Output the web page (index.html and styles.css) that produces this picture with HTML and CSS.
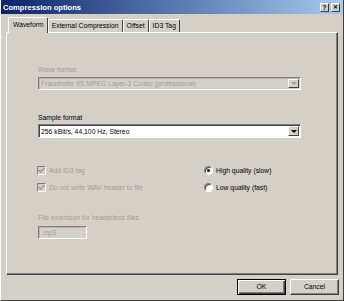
FILE: index.html
```html
<!DOCTYPE html>
<html lang="en">

<head>
    <meta charset="UTF-8">
    <title>Compression options</title>
    <link rel="stylesheet" href="styles.css">
</head>

<body>
    <div class="window">
        <div class="titlebar">
            <span class="title">Compression options</span>
            <span class="capbtn">?</span>
            <span class="capbtn close">&#x2715;</span>
        </div>

        <div class="tabs">
            <span class="tab current">Waveform</span>
            <span class="tab">External Compression</span>
            <span class="tab">Offset</span>
            <span class="tab">ID3 Tag</span>
        </div>

        <div class="panel">
            <div class="label disabled first">Wave format</div>
            <div class="combo off">
                <span class="value">Fraunhofer IIS MPEG Layer-3 Codec (professional)</span>
                <span class="drop"><i></i></span>
            </div>

            <div class="label second">Sample format</div>
            <div class="combo tall">
                <span class="value">256 kBit/s, 44,100 Hz, Stereo</span>
                <span class="drop"><i></i></span>
            </div>

            <div class="options">
                <label class="check disabled"><span class="box">
                        <svg width="7" height="7" viewBox="0 0 7 7">
                            <path d="M0.5 3 L2.5 5 L6.5 1" fill="none" stroke="#9c988f" stroke-width="1.3" />
                        </svg></span>Add ID3 tag</label>
                <label class="radio"><span class="dot on"></span>High quality (slow)</label>
                <label class="check disabled"><span class="box">
                        <svg width="7" height="7" viewBox="0 0 7 7">
                            <path d="M0.5 3 L2.5 5 L6.5 1" fill="none" stroke="#9c988f" stroke-width="1.3" />
                        </svg></span>Do not write WAV header to file</label>
                <label class="radio"><span class="dot"></span>Low quality (fast)</label>
            </div>

            <div class="label disabled third">File extension for headerless files</div>
            <div class="edit">.mp3</div>
        </div>

        <div class="footer">
            <span class="button default">OK</span>
            <span class="button">Cancel</span>
        </div>
    </div>
</body>

</html>
```

FILE: styles.css
```css
* {
    margin: 0px;
    padding: 0px;
    box-sizing: border-box;
}

body {
    background: #d4d0c8;
    font-family: "Liberation Sans", Arial, sans-serif;
    font-size: 6.8px;
    color: #000;
}

.window {
    width: 344px;
    height: 301px;
    background: #d4d0c8;
    border-right: 1px solid #404040;
    border-bottom: 1px solid #404040;
    border-left: 1px solid #ffffff;
    display: flex;
    flex-direction: column;
}

/* 标题栏 */
.titlebar {
    height: 14px;
    display: flex;
    align-items: center;
    padding: 0 3px 0 2px;
    background: linear-gradient(to right, #0a246a, #a6caf0);
}

.title {
    flex: 1;
    color: #fff;
    font-weight: bold;
    font-size: 7.6px;
}

.capbtn {
    width: 9px;
    height: 9px;
    margin-left: 2px;
    background: #d4d0c8;
    border: 1px solid;
    border-color: #fff #404040 #404040 #fff;
    font-size: 6.5px;
    font-weight: bold;
    line-height: 7px;
    text-align: center;
}

.close {
    font-size: 5.5px;
}

/* 选项卡 */
.tabs {
    height: 18px;
    padding: 3px 0 0 7px;
    display: flex;
    align-items: flex-end;
    position: relative;
    z-index: 1;
}

.tab {
    height: 13px;
    padding: 0 3px;
    line-height: 12px;
    border-top: 1px solid #fff;
    border-left: 1px solid #fff;
    border-right: 1px solid #404040;
    border-radius: 2px 2px 0 0;
}

.tab.current {
    height: 16px;
    margin-bottom: -1px;
    padding: 0 3px 0 4px;
    line-height: 13px;
    background: #d4d0c8;
}

.panel {
    width: 332px;
    height: 243px;
    margin-left: 5px;
    padding: 0 0 0 31px;
    border: 1px solid;
    border-color: #fff #404040 #404040 #fff;
    box-shadow: inset -1px -1px #808080;
}

.label {
    height: 9px;
    line-height: 9px;
}

.first {
    margin-top: 32px;
}

.second {
    margin-top: 23px;
}

.third {
    margin-top: 20px;
}

.disabled {
    color: #a29e96;
}

/* 下拉框 */
.combo {
    width: 263px;
    height: 13px;
    margin-top: 3px;
    display: flex;
    align-items: center;
    background: #fff;
    border: 1px solid;
    border-color: #808080 #fff #fff #808080;
    box-shadow: inset 1px 1px #404040;
    padding: 1px 1px 1px 2px;
}

.combo.tall {
    height: 14px;
    margin-top: 2px;
}

.combo.off {
    background: #d4d0c8;
    color: #a29e96;
    box-shadow: inset 1px 1px #b8b4ac;
}

.value {
    flex: 1;
}

.drop {
    width: 11px;
    height: 100%;
    display: flex;
    align-items: center;
    justify-content: center;
    background: #d4d0c8;
    border: 1px solid;
    border-color: #fff #404040 #404040 #fff;
}

.drop i {
    border-top: 3px solid #000;
    border-left: 3px solid transparent;
    border-right: 3px solid transparent;
}

.off .drop i {
    border-top-color: #a29e96;
}

/* 复选框和单选框 */
.options {
    margin-top: 27px;
    display: grid;
    grid-template-columns: 166px 1fr;
    row-gap: 6px;
}

.check,
.radio {
    height: 11px;
    display: flex;
    align-items: center;
}

.box {
    width: 9px;
    height: 9px;
    margin: 0 3px 0 -1px;
    display: flex;
    align-items: center;
    justify-content: center;
    border: 1px solid;
    border-color: #808080 #fff #fff #808080;
    background: #d4d0c8;
}

.dot {
    width: 9px;
    height: 9px;
    margin-right: 3px;
    border-radius: 50%;
    background: #fff;
    border: 1px solid;
    border-color: #808080 #fff #fff #808080;
    box-shadow: inset 1px 1px #404040;
    display: flex;
    align-items: center;
    justify-content: center;
}

.dot.on::after {
    content: "";
    width: 3px;
    height: 3px;
    border-radius: 50%;
    background: #000;
}

.edit {
    width: 49px;
    height: 13px;
    margin-top: 4px;
    padding-left: 2px;
    line-height: 11px;
    color: #a29e96;
    border: 1px solid;
    border-color: #808080 #fff #fff #808080;
    box-shadow: inset 1px 1px #b8b4ac;
}

/* 底部按钮 */
.footer {
    display: flex;
    justify-content: flex-end;
    gap: 4px;
    padding: 4px 4px 0 0;
}

.button {
    width: 49px;
    height: 16px;
    line-height: 13px;
    text-align: center;
    border: 1px solid;
    border-color: #fff #404040 #404040 #fff;
    box-shadow: inset -1px -1px #808080;
}

.button.default {
    border: 1px solid #000;
    box-shadow: inset 1px 1px #fff, inset -1px -1px #404040, inset -2px -2px #808080;
}
```
